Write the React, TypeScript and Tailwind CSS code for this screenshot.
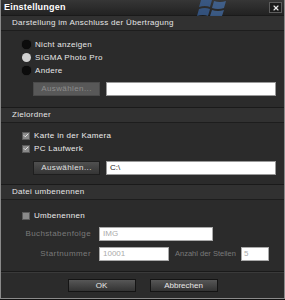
import { Check, X } from 'lucide-react';

const font = { fontFamily: '"Liberation Sans", Arial, sans-serif' };

function SectionHeader({ title }: { title: string }) {
  return (
    <div className="h-[16px] flex items-center pl-[11px] bg-[#313131] border-y border-t-[#1a1a1a] border-b-[#1d1d1d] text-[8px] text-[#e6e6e6] tracking-[0.3px]">
      {title}
    </div>
  );
}

function Radio({ label, checked }: { label: string; checked?: boolean }) {
  return (
    <div className="flex items-center h-[13px] gap-[4px]">
      <span
        className={`w-[9px] h-[9px] rounded-full ${checked ? 'bg-[#d2d2d2]' : 'bg-[#0c0c0c] shadow-[0_0_1px_#000]'}`}
      />
      <span className="text-[8px] text-[#e8e8e8] tracking-[0.3px]">{label}</span>
    </div>
  );
}

function CheckBox({ label, checked }: { label: string; checked?: boolean }) {
  return (
    <div className="flex items-center h-[13px] gap-[4px]">
      <span className="w-[8px] h-[8px] bg-[#8a8a8a] border border-[#5a5a5a] flex items-center justify-center">
        {checked && <Check size={7} strokeWidth={3.5} color="#f0f0f0" />}
      </span>
      <span className="text-[8px] text-[#ececec] tracking-[0.3px]">{label}</span>
    </div>
  );
}

function PathRow({ disabled, value }: { disabled?: boolean; value?: string }) {
  return (
    <div className="flex items-center h-[14px] pl-[32px] gap-[6px]">
      <button
        className={`w-[67px] h-[14px] text-[8px] tracking-[0.4px] border ${
          disabled
            ? 'bg-[#585858] border-[#4a4a4a] text-[#8c8c8c]'
            : 'bg-gradient-to-b from-[#505050] to-[#353535] border-[#1e1e1e] text-[#e0e0e0]'
        }`}
      >
        Auswählen...
      </button>
      <div className="w-[170px] h-[14px] bg-white border border-[#999] text-[8px] text-[#222] pl-[3px] leading-[12px]">
        {value}
      </div>
    </div>
  );
}

export default function App() {
  return (
    <div style={font} className="w-[285px] h-[300px] bg-[#111] overflow-hidden">
      <div className="w-[285px] h-[299px] bg-[#2b2b2b] border-x border-b border-[#8a8a8a] flex flex-col relative">
        {/* Title bar */}
        <div className="h-[15px] flex items-center justify-between bg-gradient-to-b from-[#363636] to-[#222] relative">
          <span className="pl-[3px] text-[9px] font-bold text-white tracking-[0.2px]">Einstellungen</span>
          <svg className="absolute left-[196px] top-[-2px] opacity-60" width="32" height="18" viewBox="0 0 32 18">
            <path d="M4 2 Q10 0 15 2 L13 9 Q8 7 2 9 Z" fill="#3d6fb5" />
            <path d="M17 3 Q23 5 29 3 L27 10 Q21 12 15 10 Z" fill="#4a7dc2" />
            <path d="M2 11 Q8 9 13 11 L11 18 Q6 16 0 18 Z" fill="#3d6fb5" />
            <path d="M15 12 Q21 14 27 12 L25 18 L13 18 Z" fill="#4a7dc2" />
          </svg>
          <div className="mr-[2px] w-[13px] h-[11px] bg-[#1b1b1b] border border-[#5c5c5c] flex items-center justify-center">
            <X size={8} strokeWidth={3.5} color="#e8e8e8" />
          </div>
        </div>

        <SectionHeader title="Darstellung im Anschluss  der Übertragung" />
        <div className="flex flex-col pl-[21px] pt-[7px]">
          <Radio label="Nicht anzeigen" />
          <Radio label="SIGMA Photo Pro" checked />
          <Radio label="Andere" />
        </div>
        <div className="mt-[5px]">
          <PathRow disabled />
        </div>
        <div className="h-[11px]" />

        <SectionHeader title="Zielordner" />
        <div className="flex flex-col pl-[21px] pt-[6px]">
          <CheckBox label="Karte in der Kamera" checked />
          <CheckBox label="PC Laufwerk" checked />
        </div>
        <div className="mt-[6px]">
          <PathRow value="C:\" />
        </div>
        <div className="h-[9px]" />

        <SectionHeader title="Datei umbenennen" />
        <div className="flex flex-col pl-[21px] pt-[9px]">
          <CheckBox label="Umbenennen" />
        </div>
        <div className="flex items-center mt-[5px] h-[14px]">
          <span className="w-[98px] pr-[8px] text-right text-[8px] text-[#7a7a7a] tracking-[0.4px]">Buchstabenfolge</span>
          <div className="w-[114px] h-[14px] bg-white border border-[#aaa] text-[8px] text-[#aaa] pl-[3px] leading-[12px]">IMG</div>
        </div>
        <div className="flex items-center mt-[6px] h-[14px]">
          <span className="w-[98px] pr-[8px] text-right text-[8px] text-[#7a7a7a] tracking-[0.4px]">Startnummer</span>
          <div className="w-[70px] h-[14px] bg-white border border-[#aaa] text-[8px] text-[#aaa] pl-[3px] leading-[12px]">10001</div>
          <span className="ml-[6px] mr-[5px] text-[7.5px] text-[#7a7a7a] whitespace-nowrap">Anzahl der Stellen</span>
          <div className="w-[28px] h-[14px] bg-white border border-[#aaa] text-[8px] text-[#aaa] pl-[2px] leading-[12px]">5</div>
        </div>

        <div className="mt-[10px] border-t border-[#1a1a1a] border-b border-b-[#3a3a3a]" />
        <div className="flex justify-center gap-[14px] pt-[6px]">
          <button className="w-[68px] h-[13px] bg-gradient-to-b from-[#575757] to-[#333] border border-[#141414] text-[8px] text-[#e8e8e8]">
            OK
          </button>
          <button className="w-[68px] h-[13px] bg-gradient-to-b from-[#575757] to-[#333] border border-[#141414] text-[8px] text-[#e8e8e8]">
            Abbrechen
          </button>
        </div>
      </div>
    </div>
  );
}
